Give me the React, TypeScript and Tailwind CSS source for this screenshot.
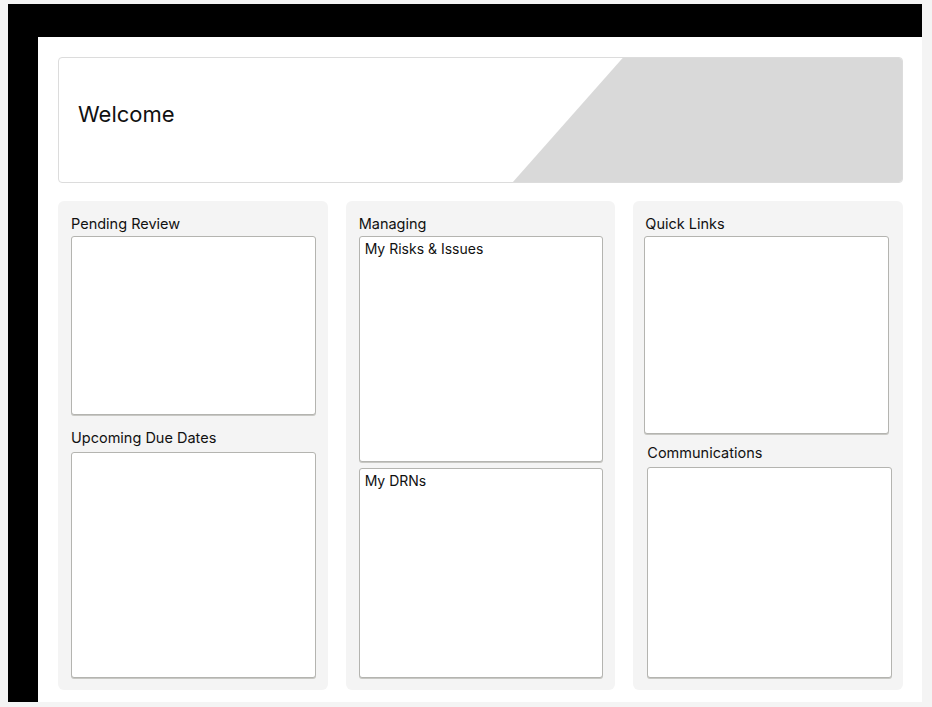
const font = { fontFamily: 'Inter, "Noto Sans", sans-serif' }

function Box({ label, className = '' }: { label?: string; className?: string }) {
  return (
    <div
      className={`rounded-[3px] border border-[#b4b4b0] bg-white shadow-[0_1px_0_#c8c8c4] ${className}`}
    >
      {label && <div className="px-[5px] pt-[3px] text-[14px] leading-[18px] text-[#111]">{label}</div>}
    </div>
  )
}

function Title({ children, className = '' }: { children: string; className?: string }) {
  return <div className={`text-[14.5px] leading-[18px] text-[#111] ${className}`}>{children}</div>
}

export default function App() {
  return (
    <div className="h-screen w-full bg-[#f4f4f4] pb-[5px] pl-2 pr-[10px] pt-1" style={font}>
      <div className="flex h-full flex-col bg-black pl-[30px] pt-[33px]">
        <main className="flex flex-1 flex-col bg-white pb-3 pl-5 pr-[19px] pt-5">
          {/* banner */}
          <div className="relative h-[126px] overflow-hidden rounded-[4px] border border-[#dcdcdc]">
            <svg
              className="absolute inset-0 h-full w-full"
              viewBox="0 0 845 126"
              preserveAspectRatio="none"
            >
              <path d="M565 0 H845 V126 H455 Z" fill="#d9d9d9" />
            </svg>
            <div className="relative flex h-full items-center pb-[12px] pl-[19px]">
              <h1 className="text-[22px] font-normal text-[#111]">Welcome</h1>
            </div>
          </div>

          <div className="mt-[18px] grid flex-1 grid-cols-3 gap-[18px]">
            {/* left column */}
            <section className="flex flex-col rounded-[6px] bg-[#f4f4f4] pb-3 pl-[13px] pr-3 pt-[14px]">
              <Title>Pending Review</Title>
              <Box className="mt-[3px] h-[179px]" />
              <Title className="mt-[14px]">Upcoming Due Dates</Title>
              <Box className="mt-[5px] flex-1" />
            </section>

            {/* middle column */}
            <section className="flex flex-col rounded-[6px] bg-[#f4f4f4] pb-3 pl-[13px] pr-3 pt-[14px]">
              <Title>Managing</Title>
              <Box label="My Risks & Issues" className="mt-[3px] h-[226px]" />
              <Box label="My DRNs" className="mt-[6px] flex-1" />
            </section>

            {/* right column */}
            <section className="flex flex-col rounded-[6px] bg-[#f4f4f4] pb-3 pl-[11px] pr-[14px] pt-[14px]">
              <Title className="pl-px">Quick Links</Title>
              <Box className="mt-[3px] h-[198px]" />
              <Title className="ml-[3px] mt-[10px]">Communications</Title>
              <Box className="ml-[3px] mr-[-3px] mt-[5px] flex-1" />
            </section>
          </div>
        </main>
      </div>
    </div>
  )
}
